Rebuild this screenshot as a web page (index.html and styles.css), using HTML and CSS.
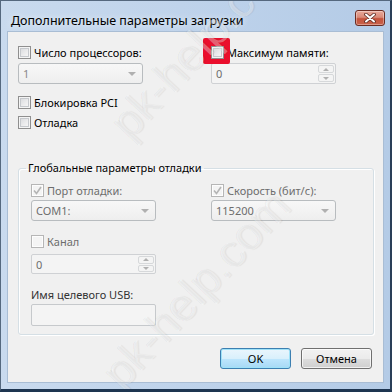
FILE: index.html
```html
<!DOCTYPE html>
<html lang="ru">
<head>
<meta charset="utf-8">
<title>Дополнительные параметры загрузки</title>
<link rel="stylesheet" href="styles.css">
</head>
<body>
<div class="window">
  <div class="titlebar">
    <span class="title">Дополнительные параметры загрузки</span>
    <span class="close">
      <svg width="14" height="10" viewBox="0 0 14 10">
        <path d="M3 1.5 L11 8.5 M11 1.5 L3 8.5" stroke="#5a2a22" stroke-width="3.6" stroke-linecap="round"/>
        <path d="M3 1.5 L11 8.5 M11 1.5 L3 8.5" stroke="#ffffff" stroke-width="2" stroke-linecap="round"/>
      </svg>
    </span>
  </div>
  <div class="client">
    <div class="top-grid">
      <div class="col">
        <div class="chk"><span class="box"></span><span>Число процессоров:</span></div>
        <div class="combo"><span class="val">1</span><span class="arrow"></span></div>
      </div>
      <div class="col">
        <div class="chk"><span class="mark"></span><span class="box"></span><span>Максимум памяти:</span></div>
        <div class="spin"><span class="val">0</span><span class="spinbtns"><span class="sbtn"><span class="up"></span></span><span class="sbtn"><span class="down"></span></span></span></div>
      </div>
    </div>
    <div class="chk row-pci"><span class="box"></span><span>Блокировка PCI</span></div>
    <div class="chk row-dbg"><span class="box"></span><span>Отладка</span></div>

    <fieldset class="group">
      <legend>Глобальные параметры отладки</legend>
      <div class="gbody">
        <div class="gcol">
          <div class="chk dis"><span class="box checked"><svg width="9" height="9" viewBox="0 0 9 9"><path d="M1 4.5 L3.5 7.5 L8 1" fill="none" stroke="#b4b4b4" stroke-width="1.6"/></svg></span><span>Порт отладки:</span></div>
          <div class="combo dark"><span class="val">COM1:</span><span class="arrow"></span></div>
          <div class="chk dis row-chan"><span class="box"></span><span>Канал</span></div>
          <div class="spin short"><span class="val">0</span><span class="spinbtns"><span class="sbtn"><span class="up"></span></span><span class="sbtn"><span class="down"></span></span></span></div>
          <div class="usb-label">Имя целевого USB:</div>
          <div class="textbox"></div>
        </div>
        <div class="gcol">
          <div class="chk dis"><span class="box checked"><svg width="9" height="9" viewBox="0 0 9 9"><path d="M1 4.5 L3.5 7.5 L8 1" fill="none" stroke="#b4b4b4" stroke-width="1.6"/></svg></span><span>Скорость (бит/с):</span></div>
          <div class="combo dark"><span class="val">115200</span><span class="arrow"></span></div>
        </div>
      </div>
    </fieldset>

    <div class="buttons">
      <span class="btn default">OK</span>
      <span class="btn">Отмена</span>
    </div>
  </div>
  <span class="wm wm1">pk-help.com</span>
  <span class="wm wm2">pk-help.com</span>
</div>
</body>
</html>
```

FILE: styles.css
```css
html, body {
  margin: 0;
  padding: 0;
  background: #1d3550;
}
body {
  width: 392px;
  height: 392px;
  overflow: hidden;
  font-family: "Segoe UI", "Noto Sans", "Open Sans", sans-serif;
  font-size: 11px;
  color: #000;
}
.window {
  position: relative;
  width: 392px;
  height: 391px;
  box-sizing: border-box;
  border-left: 1px solid #55687e;
  border-top: 1px solid #55687e;
  border-right: 2px solid #2a3f58;
  border-bottom: 2px solid #1e3550;
  background: linear-gradient(90deg, #c9daee 0%, #bcd1ea 60%, #b4cbe6 100%);
  display: flex;
  flex-direction: column;
  padding: 0 6px 6px 6px;
  overflow: hidden;
}
.titlebar {
  height: 30px;
  display: flex;
  align-items: center;
  position: relative;
}
.title {
  font-size: 12.5px;
  margin-left: 4px;
  margin-top: 8px;
  color: #000;
  text-shadow: 0 0 6px rgba(255,255,255,0.9);
}
.close {
  position: absolute;
  right: -1px;
  top: 9px;
  width: 30px;
  height: 16px;
  box-sizing: border-box;
  border: 1px solid #6b2c22;
  border-radius: 3px;
  background: linear-gradient(180deg, #e9a99a 0%, #d98a78 45%, #c4533c 55%, #c9624a 100%);
  box-shadow: inset 0 0 0 1px rgba(255,255,255,0.35);
  display: flex;
  align-items: center;
  justify-content: center;
}
.client {
  flex: 1;
  background: #f0f0f0;
  border: 1px solid #a9bdd4;
  padding: 14px 11px 0 10px;
  display: flex;
  flex-direction: column;
}
.top-grid {
  display: grid;
  grid-template-columns: 125px 125px;
  column-gap: 68px;
}
.col {
  display: flex;
  flex-direction: column;
  gap: 4px;
}
.chk {
  display: flex;
  align-items: center;
  gap: 3px;
  height: 13px;
  line-height: 13px;
  white-space: nowrap;
  position: relative;
}
.chk.dis {
  color: #6d6d6d;
}
.box {
  position: relative;
  flex: none;
  width: 13px;
  height: 13px;
  box-sizing: border-box;
  border: 1px solid #8f8f8f;
  background: linear-gradient(135deg, #d4d6d9 0%, #eeeeef 60%, #fafafa 100%);
  box-shadow: inset 0 0 0 1px #f4f4f4, inset 0 0 0 2px #c6c9cd;
  display: flex;
  align-items: center;
  justify-content: center;
  z-index: 2;
}
.chk.dis .box {
  border-color: #b6b6b6;
  background: #f4f4f4;
  box-shadow: inset 0 0 0 1px #fdfdfd;
}
.mark {
  position: absolute;
  left: -8px;
  top: -8px;
  width: 27px;
  height: 26px;
  border-radius: 2px;
  background: #ea0f2d;
  z-index: 1;
}
.combo, .spin, .textbox {
  position: relative;
  box-sizing: border-box;
  border: 1px solid #c9cccf;
  border-radius: 2px;
  background: #f4f4f4;
  color: #8a8a8a;
  display: flex;
  align-items: center;
}
.combo {
  height: 21px;
  border-radius: 3px;
  border-color: #b8bcbf;
  background: linear-gradient(180deg, #f7f7f7 0%, #f3f3f3 50%, #eeeeee 100%);
}
.combo.dark .val, .spin .val { color: #6d6d6d; }
.combo .val, .spin .val {
  padding-left: 4px;
  flex: 1;
}
.arrow {
  width: 0;
  height: 0;
  border-left: 4px solid transparent;
  border-right: 4px solid transparent;
  border-top: 4px solid #b0b0b0;
  margin-right: 6px;
}
.spin {
  height: 21px;
  border-color: #cfd1d4;
}
.spin.short { height: 20px; }
.spinbtns {
  display: flex;
  flex-direction: column;
  align-self: stretch;
  width: 16px;
  padding: 1px;
  gap: 1px;
}
.sbtn {
  flex: 1;
  border: 1px solid #d6d8da;
  border-radius: 2px;
  background: #f4f4f4;
  display: flex;
  align-items: center;
  justify-content: center;
}
.up, .down {
  width: 0;
  height: 0;
  border-left: 3px solid transparent;
  border-right: 3px solid transparent;
}
.up { border-bottom: 3px solid #b0b0b0; }
.down { border-top: 3px solid #b0b0b0; }
.row-pci { margin-top: 12px; }
.row-dbg { margin-top: 7px; }
.group {
  margin: 31px 0 0 0;
  width: 356px;
  box-sizing: border-box;
  padding: 0;
  border: 1px solid #d5dfe5;
  border-radius: 3px;
  box-shadow: inset 1px 1px 0 #ffffff, 1px 1px 0 #ffffff;
  min-width: 0;
}
.group legend {
  margin-left: 7px;
  padding: 0 2px;
  line-height: 16px;
  font-size: 11px;
}
.gbody {
  display: grid;
  grid-template-columns: 125px 125px;
  column-gap: 55px;
  padding: 8px 0 8px 12px;
}
.gcol {
  display: flex;
  flex-direction: column;
}
.gcol .combo { margin-top: 3px; }
.row-chan { margin-top: 14px; }
.gcol .spin { margin-top: 6px; }
.usb-label {
  margin-top: 13px;
  line-height: 16px;
  color: #333;
}
.textbox {
  margin-top: 1px;
  height: 22px;
  border-color: #c6c9cc;
}
.buttons {
  display: flex;
  justify-content: flex-end;
  gap: 10px;
  margin-top: 13px;
}
.btn {
  width: 71px;
  height: 21px;
  box-sizing: border-box;
  border: 1px solid #707070;
  border-radius: 3px;
  background: linear-gradient(180deg, #f2f2f2 0%, #ebebeb 50%, #dddddd 51%, #cfcfcf 100%);
  box-shadow: inset 0 0 0 1px rgba(255,255,255,0.7);
  display: flex;
  align-items: center;
  justify-content: center;
  font-size: 11px;
}
.btn.default {
  border-color: #3c7fb1;
  background: linear-gradient(180deg, #eaf6fd 0%, #d9f0fc 50%, #bee6fd 51%, #a7d9f5 100%);
  box-shadow: inset 0 0 0 1px #9fe2f8;
}
.wm {
  position: absolute;
  font-family: "Liberation Sans", Arial, sans-serif;
  font-size: 46px;
  white-space: nowrap;
  color: rgba(255,255,255,0.35);
  text-shadow: 1px 1px 1px rgba(0,0,0,0.06), -1px -1px 0 rgba(0,0,0,0.03);
  transform: translate(-50%, -50%) rotate(-47deg);
  pointer-events: none;
  z-index: 5;
}
.wm1 { left: 195px; top: 288px; }
.wm2 { left: 203px; top: 38px; }
```
